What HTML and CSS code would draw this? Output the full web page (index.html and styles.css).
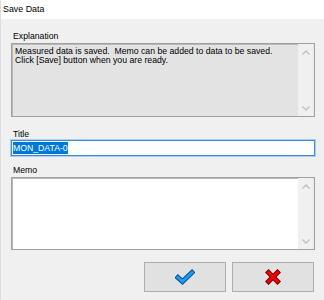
FILE: index.html
```html
<!DOCTYPE html>
<html lang="en">
  <head>
    <meta charset="UTF-8" />
    <title>Save Data</title>
    <link rel="stylesheet" href="styles.css">
  </head>
  <body>
    <div class="window">
      <div class="titlebar">Save Data</div>

      <div class="content">
        <div class="label">Explanation</div>
        <div class="field explain">
          <div class="field-text">Measured data is saved.&nbsp; Memo can be added to data to be saved.<br>Click [Save] button when you are ready.</div>
          <div class="scrollbar">
            <svg class="arrow" width="8" height="5" viewBox="0 0 8 5"><polyline points="0.5,4.5 4,1 7.5,4.5" /></svg>
            <svg class="arrow" width="8" height="5" viewBox="0 0 8 5"><polyline points="0.5,0.5 4,4 7.5,0.5" /></svg>
          </div>
        </div>

        <div class="label title-label">Title</div>
        <div class="input"><span class="selected">MON_DATA-0</span></div>

        <div class="label memo-label">Memo</div>
        <div class="field memo">
          <div class="field-text"></div>
          <div class="scrollbar">
            <svg class="arrow" width="8" height="5" viewBox="0 0 8 5"><polyline points="0.5,4.5 4,1 7.5,4.5" /></svg>
            <svg class="arrow" width="8" height="5" viewBox="0 0 8 5"><polyline points="0.5,0.5 4,4 7.5,0.5" /></svg>
          </div>
        </div>

        <div class="buttons">
          <button class="btn" title="Save">
            <svg width="20" height="16" viewBox="0 0 20 16">
              <polyline points="3,8.5 7.5,12.5 17,3.5" fill="none" stroke="#0a4f9c" stroke-width="5" stroke-linecap="square" />
              <polyline points="3,8.5 7.5,12.5 17,3.5" fill="none" stroke="#1e9bf0" stroke-width="3" stroke-linecap="square" />
            </svg>
          </button>
          <button class="btn" title="Cancel">
            <svg width="16" height="16" viewBox="0 0 16 16">
              <path d="M3.5 3.5 L12.5 12.5 M12.5 3.5 L3.5 12.5" stroke="#7a0000" stroke-width="5" stroke-linecap="square" />
              <path d="M3.5 3.5 L12.5 12.5 M12.5 3.5 L3.5 12.5" stroke="#f00000" stroke-width="3" stroke-linecap="square" />
            </svg>
          </button>
        </div>
      </div>
    </div>
  </body>
</html>
```

FILE: styles.css
```css
html,
body {
  margin: 0;
  padding: 0;
  background-color: #f0f0f0;
  font-family: "Liberation Sans", Arial, sans-serif;
  font-size: 8.7px;
  color: #000;
}

.window {
  height: 300px;
  box-sizing: border-box;
  border-left: 1px solid #dedede;
}

.titlebar {
  height: 19px;
  line-height: 19px;
  padding-left: 2px;
  background-color: #fff;
  font-size: 8.9px;
}

.content {
  padding: 12px 9px 0 10px;
}

.label {
  height: 10px;
  line-height: 10px;
  margin-left: 2px;
  margin-bottom: 2px;
}

.title-label {
  margin-top: 12px;
  margin-bottom: 1px;
}

.memo-label {
  margin-top: 9px;
}

/* sunken boxes with a scrollbar */
.field {
  display: flex;
  box-sizing: border-box;
  border: 1px solid #a0a0a0;
  box-shadow: inset 1px 1px 0 #b9b9b9;
}

.explain {
  height: 74px;
  background-color: #e3e3e3;
}

.memo {
  height: 73px;
  background-color: #fff;
}

.field-text {
  flex: 1;
  padding: 3px 3px;
  line-height: 9px;
}

.scrollbar {
  width: 15px;
  display: flex;
  flex-direction: column;
  justify-content: space-between;
  align-items: center;
  padding: 6px 0 5px;
  background-color: #f0f0f0;
  border-right: 1px solid #e8e8e8;
}

.arrow polyline {
  fill: none;
  stroke: #c0c0c0;
  stroke-width: 1.4;
}

.input {
  height: 16px;
  box-sizing: border-box;
  border: 1px solid #3c8be0;
  box-shadow: 0 0 0 1px #a8cdf2;
  background-color: #fff;
  padding: 1px 1px;
  line-height: 12px;
}

.selected {
  background-color: #0078d7;
  color: #fff;
  padding: 1px 0;
}

.buttons {
  display: flex;
  justify-content: flex-end;
  gap: 6px;
  margin-top: 12px;
  padding-right: 1px;
}

.btn {
  width: 82px;
  height: 30px;
  margin: 0;
  padding: 0;
  display: flex;
  justify-content: center;
  align-items: center;
  background-color: #e1e1e1;
  border: 1px solid #adadad;
}
```
